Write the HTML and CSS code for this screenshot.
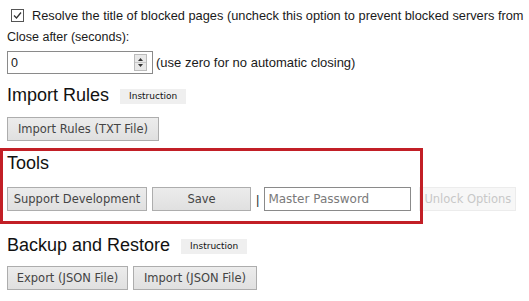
FILE: index.html
```html
<!DOCTYPE html>
<html>
<head>
<meta charset="utf-8">
<link rel="stylesheet" href="styles.css">
</head>
<body>
<div class="page">
  <label class="check-row">
    <svg class="checkbox" width="13" height="13" viewBox="0 0 13 13"><rect x="0.5" y="0.5" width="12" height="12" fill="#fff" stroke="#555"/><path d="M3 6.5 L5.5 9 L10 3.5" fill="none" stroke="#333" stroke-width="1.3"/></svg>
    <span class="check-text">Resolve the title of blocked pages (uncheck this option to prevent blocked servers from</span>
  </label>
  <div class="text-row">Close after (seconds):</div>
  <div class="input-row">
    <div class="num-input">
      <span class="num-value">0</span>
      <span class="spinner">
        <svg width="11" height="15" viewBox="0 0 11 15"><rect x="0" y="0" width="11" height="15" fill="#e8e8e8"/><line x1="0" y1="7.5" x2="11" y2="7.5" stroke="#c8c8c8"/><path d="M3 6 L5.5 3 L8 6 Z" fill="#333"/><path d="M3 9 L5.5 12 L8 9 Z" fill="#333"/></svg>
      </span>
    </div>
    <span class="hint">(use zero for no automatic closing)</span>
  </div>

  <div class="heading-row first">
    <h2 class="heading">Import Rules</h2>
    <span class="badge">Instruction</span>
  </div>
  <div class="btn-row">
    <button class="btn w-import-rules">Import Rules (TXT File)</button>
  </div>

  <section class="tools">
    <h2 class="heading tools-heading">Tools</h2>
    <div class="btn-row tools-row">
      <button class="btn w-support">Support Development</button>
      <button class="btn w-save">Save</button>
      <span class="sep">|</span>
      <input class="pw" type="text" placeholder="Master Password">
      <button class="btn disabled w-unlock" disabled>Unlock Options</button>
    </div>
  </section>

  <div class="heading-row backup">
    <h2 class="heading">Backup and Restore</h2>
    <span class="badge">Instruction</span>
  </div>
  <div class="btn-row last">
    <button class="btn w-export">Export (JSON File)</button>
    <button class="btn w-import">Import (JSON File)</button>
  </div>
</div>
</body>
</html>
```

FILE: styles.css
```css
html, body {
  margin: 0;
  padding: 0;
  background: #fff;
  overflow: hidden;
}
body {
  font-family: "Liberation Sans", Arial, sans-serif;
  font-size: 12.5px;
  color: #1a1a1a;
}
.page {
  padding: 3px 7px 0 7px;
  width: 529px;
  box-sizing: border-box;
}
.check-row {
  display: flex;
  align-items: center;
  height: 24px;
  white-space: nowrap;
  overflow: hidden;
  width: 522px;
  font-size: 12.8px;
}
.checkbox {
  margin-left: 4px;
  margin-right: 8px;
  flex: none;
}
.text-row {
  height: 20px;
  line-height: 20px;
}
.input-row {
  display: flex;
  align-items: center;
  margin-top: 4px;
  height: 23px;
}
.num-input {
  width: 146px;
  height: 23px;
  box-sizing: border-box;
  border: 1px solid #8a8a8a;
  display: flex;
  align-items: center;
  justify-content: space-between;
  padding: 0 5px 0 3px;
  background: #fff;
  flex: none;
}
.num-value {
  font-size: 12.5px;
}
.spinner {
  display: flex;
  border: 1px solid #bbb;
}
.spinner svg { display: block; }
.hint {
  margin-left: 3px;
  font-size: 13px;
  white-space: nowrap;
}
.heading-row {
  display: flex;
  align-items: flex-start;
  height: 22px;
}
.heading-row.first { margin-top: 10px; }
.heading-row.backup { margin-top: 23px; }
.heading {
  margin: 0;
  font-weight: normal;
  font-size: 18px;
  line-height: 22px;
  color: #111;
}
.badge {
  margin-left: 11px;
  margin-top: 5px;
  height: 15px;
  line-height: 15px;
  padding: 0 9px;
  background: #efefef;
  font-family: "DejaVu Sans", Verdana, sans-serif;
  font-size: 9px;
  color: #111;
}
.btn-row {
  display: flex;
  align-items: center;
  gap: 5px;
  margin-top: 11px;
}
.btn-row.last { margin-top: 10px; }
.btn {
  flex: none;
  white-space: nowrap;
  height: 24px;
  box-sizing: border-box;
  padding: 0;
  text-align: center;
  border: 1px solid #adadad;
  background: linear-gradient(#ececec, #e0e0e0);
  font-family: "DejaVu Sans", Verdana, sans-serif;
  font-size: 11.5px;
  color: #444;
  border-radius: 0;
  margin: 0;
}
.w-import-rules { width: 152px; }
.w-support { width: 140px; }
.w-save { width: 99px; }
.w-unlock { width: 97px; }
.w-export { width: 121px; }
.w-import { width: 124px; }
.btn.disabled {
  background: #f7f7f7;
  border-color: #ececec;
  color: #c8c8c8;
  margin-left: 3px;
}
.sep {
  margin: 0;
  font-size: 13px;
  color: #333;
}
.pw {
  flex: none;
  width: 147px;
  height: 24px;
  box-sizing: border-box;
  border: 1px solid #8a8a8a;
  padding: 0 3px;
  margin: 0;
  font-family: "DejaVu Sans", Verdana, sans-serif;
  font-size: 12px;
  color: #333;
  outline: none;
}
.pw::placeholder { color: #7a7a7a; }
.tools {
  position: relative;
  margin-top: 11px;
}
.tools::after {
  content: "";
  position: absolute;
  left: -7px;
  top: -4px;
  width: 423px;
  height: 76px;
  box-sizing: border-box;
  border: 3px solid #c21f26;
  pointer-events: none;
}
.tools-row { margin-top: 13px; }
```
